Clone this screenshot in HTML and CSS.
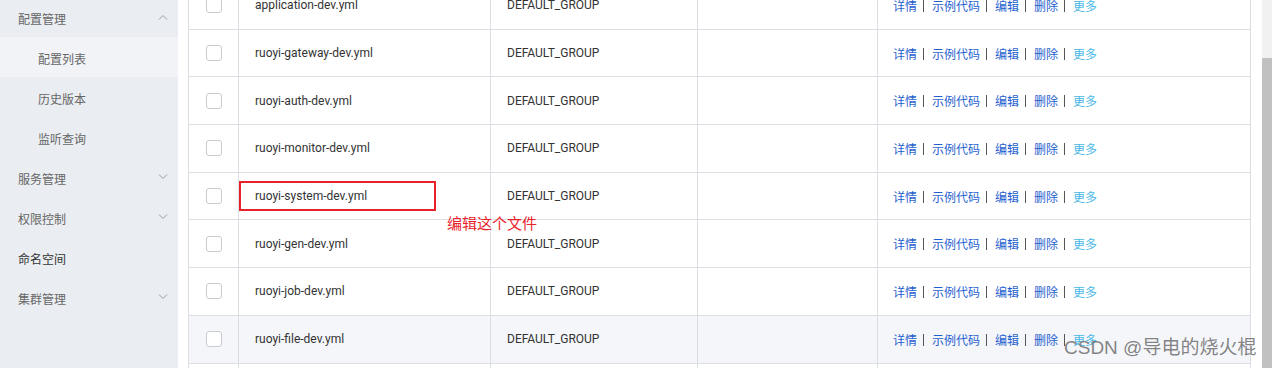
FILE: index.html
```html
<!DOCTYPE html>
<html lang="zh-CN">
<head>
<meta charset="utf-8">
<title>配置列表</title>
<link rel="stylesheet" href="styles.css">
</head>
<body>
<div class="app">
  <aside class="sidebar">
    <ul class="menu">
      <li class="menu-item"><span>配置管理</span><svg class="chev" width="10" height="6" viewBox="0 0 10 6"><path d="M1 5.5 L5 1.5 L9 5.5" fill="none" stroke="#9a9ca3" stroke-width="1"/></svg></li>
      <li class="menu-sub active">配置列表</li>
      <li class="menu-sub">历史版本</li>
      <li class="menu-sub">监听查询</li>
      <li class="menu-item"><span>服务管理</span><svg class="chev" width="10" height="6" viewBox="0 0 10 6"><path d="M1 0.5 L5 4.5 L9 0.5" fill="none" stroke="#9a9ca3" stroke-width="1"/></svg></li>
      <li class="menu-item"><span>权限控制</span><svg class="chev" width="10" height="6" viewBox="0 0 10 6"><path d="M1 0.5 L5 4.5 L9 0.5" fill="none" stroke="#9a9ca3" stroke-width="1"/></svg></li>
      <li class="menu-item strong"><span>命名空间</span></li>
      <li class="menu-item"><span>集群管理</span><svg class="chev" width="10" height="6" viewBox="0 0 10 6"><path d="M1 0.5 L5 4.5 L9 0.5" fill="none" stroke="#9a9ca3" stroke-width="1"/></svg></li>
    </ul>
  </aside>
  <main class="content">
    <table class="grid">
      <colgroup>
        <col class="c-check"><col class="c-id"><col class="c-group"><col class="c-app"><col class="c-ops">
      </colgroup>
      <tbody>
        <tr><td class="check"><span class="box"></span></td><td>application-dev.yml</td><td>DEFAULT_GROUP</td><td></td><td class="ops"><a>详情</a><i></i><a>示例代码</a><i></i><a>编辑</a><i></i><a>删除</a><i></i><a class="more">更多</a></td></tr>
        <tr><td class="check"><span class="box"></span></td><td>ruoyi-gateway-dev.yml</td><td>DEFAULT_GROUP</td><td></td><td class="ops"><a>详情</a><i></i><a>示例代码</a><i></i><a>编辑</a><i></i><a>删除</a><i></i><a class="more">更多</a></td></tr>
        <tr><td class="check"><span class="box"></span></td><td>ruoyi-auth-dev.yml</td><td>DEFAULT_GROUP</td><td></td><td class="ops"><a>详情</a><i></i><a>示例代码</a><i></i><a>编辑</a><i></i><a>删除</a><i></i><a class="more">更多</a></td></tr>
        <tr><td class="check"><span class="box"></span></td><td>ruoyi-monitor-dev.yml</td><td>DEFAULT_GROUP</td><td></td><td class="ops"><a>详情</a><i></i><a>示例代码</a><i></i><a>编辑</a><i></i><a>删除</a><i></i><a class="more">更多</a></td></tr>
        <tr><td class="check"><span class="box"></span></td><td>ruoyi-system-dev.yml</td><td>DEFAULT_GROUP</td><td></td><td class="ops"><a>详情</a><i></i><a>示例代码</a><i></i><a>编辑</a><i></i><a>删除</a><i></i><a class="more">更多</a></td></tr>
        <tr><td class="check"><span class="box"></span></td><td>ruoyi-gen-dev.yml</td><td>DEFAULT_GROUP</td><td></td><td class="ops"><a>详情</a><i></i><a>示例代码</a><i></i><a>编辑</a><i></i><a>删除</a><i></i><a class="more">更多</a></td></tr>
        <tr><td class="check"><span class="box"></span></td><td>ruoyi-job-dev.yml</td><td>DEFAULT_GROUP</td><td></td><td class="ops"><a>详情</a><i></i><a>示例代码</a><i></i><a>编辑</a><i></i><a>删除</a><i></i><a class="more">更多</a></td></tr>
        <tr class="hover"><td class="check"><span class="box"></span></td><td>ruoyi-file-dev.yml</td><td>DEFAULT_GROUP</td><td></td><td class="ops"><a>详情</a><i></i><a>示例代码</a><i></i><a>编辑</a><i></i><a>删除</a><i></i><a class="more">更多</a></td></tr>
        <tr><td class="check"></td><td></td><td></td><td></td><td></td></tr>
      </tbody>
    </table>
    <div class="mark-box"></div>
    <div class="mark-text">编辑这个文件</div>
  </main>
  <div class="scrollbar"><div class="thumb"></div></div>
  <div class="watermark">CSDN @导电的烧火棍</div>
</div>
</body>
</html>
```
FILE: styles.css
```css
* { box-sizing: border-box; }
html, body { margin: 0; padding: 0; }
body {
  width: 1272px;
  height: 368px;
  overflow: hidden;
  background: #fff;
  font-family: Roboto, "Noto Sans CJK SC", sans-serif;
  font-size: 12px;
  color: #333;
}
.app {
  position: relative;
  display: flex;
  height: 368px;
}
.sidebar {
  width: 178px;
  flex: none;
  background: #eaedf1;
  overflow: hidden;
}
.menu {
  list-style: none;
  margin: -3px 0 0 0;
  padding: 0;
}
.menu-item, .menu-sub {
  height: 40px;
  display: flex;
  align-items: center;
  justify-content: space-between;
  color: #666;
  font-family: "Noto Sans CJK SC", sans-serif;
  padding-top: 2px;
}
.menu-item { padding-left: 18px; padding-right: 10px; }
.menu-sub { padding-left: 38px; }
.menu-sub.active { background: #f2f3f7; }
.menu-item.strong { color: #333; }
.chev { display: block; margin-top: -3px; }
.content {
  position: relative;
  flex: none;
  width: 1084px;
  padding-left: 10px;
  overflow: hidden;
}
.grid {
  table-layout: fixed;
  border-collapse: collapse;
  width: 1062px;
  margin-top: -19px;
}
.c-check { width: 50px; }
.c-id { width: 252px; }
.c-group { width: 207px; }
.c-app { width: 180px; }
.c-ops { width: 373px; }
.grid tr { height: 47.7px; }
.grid td {
  border: 1px solid #dcdee3;
  padding: 0 0 0 16px;
  white-space: nowrap;
  color: #333;
}
.grid td.check { padding: 0; text-align: center; }
.grid tr.hover td { background: #f5f6fa; }
.box {
  display: inline-block;
  width: 16px;
  height: 16px;
  border: 1px solid #c9cbd3;
  border-radius: 3px;
  background: #fff;
  vertical-align: middle;
}
.grid td.ops { font-family: "Noto Sans CJK SC", sans-serif; padding-left: 15px; }
.ops a { color: #1f5fcf; }
.ops a.more { color: #4bb8e6; }
.ops i {
  display: inline-block;
  width: 1px;
  height: 12px;
  background: #555;
  margin: 0 8px 0 6px;
  vertical-align: -1px;
}
.mark-box {
  position: absolute;
  left: 61px;
  top: 181px;
  width: 197px;
  height: 30px;
  border: 2px solid #e8222b;
}
.mark-text {
  position: absolute;
  left: 269px;
  top: 213px;
  font-family: "Noto Sans CJK SC", sans-serif;
  font-size: 15px;
  line-height: 20px;
  color: #e8222b;
}
.scrollbar {
  width: 10px;
  background: #f1f1f1;
  padding-top: 58px;
  position: absolute;
  right: 0;
  top: 0;
  height: 368px;
}
.thumb {
  height: 100%;
  background: #c1c1c1;
}
.watermark {
  position: absolute;
  left: 1064px;
  top: 336px;
  font-family: "Liberation Sans", "Noto Sans CJK SC", sans-serif;
  font-size: 19px;
  line-height: 24px;
  color: rgba(110, 110, 110, 0.85);
  white-space: nowrap;
}
```
